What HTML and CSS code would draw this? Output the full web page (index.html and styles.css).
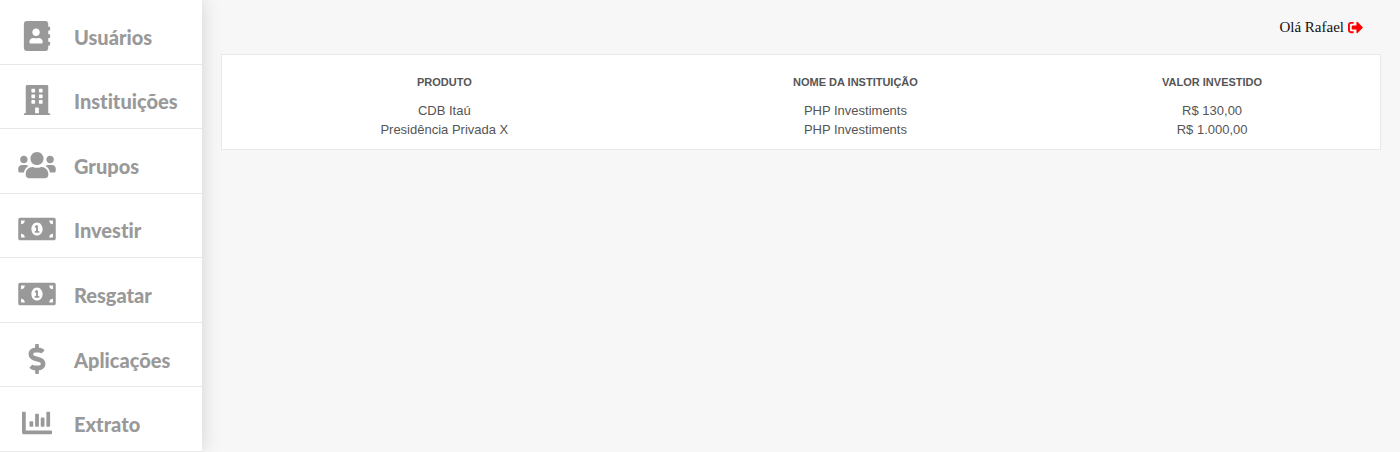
FILE: index.html
```html
<!DOCTYPE html>
<html lang="pt-BR">
<head>
<meta charset="utf-8">
<meta name="viewport" content="width=device-width, initial-scale=1">
<title>Investimentos</title>
<link rel="stylesheet" href="styles.css">
</head>
<body>
<div class="app">
  <nav class="sidebar" aria-label="Menu principal">
    <a class="item" href="#usuarios"><svg class="icon" viewBox="0 0 448 512" aria-hidden="true"><path d="M436 160c6.600 0 12-5.400 12-12v-40c0-6.600-5.400-12-12-12h-20V48c0-26.500-21.500-48-48-48H48C21.500 0 0 21.500 0 48v416c0 26.500 21.500 48 48 48h320c26.500 0 48-21.500 48-48v-48h20c6.600 0 12-5.400 12-12v-40c0-6.600-5.400-12-12-12h-20v-64h20c6.600 0 12-5.400 12-12v-40c0-6.600-5.400-12-12-12h-20v-64h20zm-228-32c35.300 0 64 28.700 64 64s-28.700 64-64 64-64-28.700-64-64 28.700-64 64-64zm112 236.800c0 10.600-10 19.200-22.400 19.200H118.400C106 384 96 375.400 96 364.800v-19.200c0-31.800 30.100-57.600 67.200-57.600h5c12.300 5.100 25.700 8 39.800 8s27.600-2.900 39.800-8h5c37.100 0 67.200 25.800 67.200 57.600v19.200z"/></svg><span class="label">Usuários</span></a>
    <a class="item" href="#instituicoes"><svg class="icon" viewBox="0 0 448 512" aria-hidden="true"><path fill-rule="evenodd" d="M436 480h-20V24c0-13-11-24-24-24H56C43 0 32 11 32 24v456H12c-7 0-12 5-12 12v20h448v-20c0-7-5-12-12-12zM128 76q0-12 12-12h40q12 0 12 12v40q0 12-12 12h-40q-12 0-12-12zM256 76q0-12 12-12h40q12 0 12 12v40q0 12-12 12h-40q-12 0-12-12zM128 172q0-12 12-12h40q12 0 12 12v40q0 12-12 12h-40q-12 0-12-12zM256 172q0-12 12-12h40q12 0 12 12v40q0 12-12 12h-40q-12 0-12-12zM128 268q0-12 12-12h40q12 0 12 12v40q0 12-12 12h-40q-12 0-12-12zM256 268q0-12 12-12h40q12 0 12 12v40q0 12-12 12h-40q-12 0-12-12zM192 396q0-12 12-12h40q12 0 12 12v84h-64z"/></svg><span class="label">Instituições</span></a>
    <a class="item" href="#grupos"><svg class="icon" viewBox="0 0 640 512" aria-hidden="true"><path d="M96 224c35.300 0 64-28.700 64-64s-28.700-64-64-64-64 28.700-64 64 28.700 64 64 64zm448 0c35.300 0 64-28.700 64-64s-28.700-64-64-64-64 28.700-64 64 28.700 64 64 64zm32 32h-64c-17.600 0-33.500 7.100-45.100 18.600 40.300 22.100 68.900 62 75.100 109.400h66c17.700 0 32-14.300 32-32v-32c0-35.300-28.700-64-64-64zm-256 0c61.900 0 112-50.100 112-112S381.900 32 320 32 208 82.100 208 144s50.100 112 112 112zm76.800 32h-8.300c-20.800 10-43.900 16-68.500 16s-47.600-6-68.500-16h-8.300C179.600 288 128 339.600 128 403.200V432c0 26.500 21.500 48 48 48h288c26.500 0 48-21.500 48-48v-28.800c0-63.600-51.600-115.200-115.200-115.200zm-223.700-13.400C161.500 263.100 145.600 256 128 256H64c-35.300 0-64 28.700-64 64v32c0 17.700 14.300 32 32 32h65.900c6.300-47.400 34.900-87.300 75.200-109.400z"/></svg><span class="label">Grupos</span></a>
    <a class="item" href="#investir"><svg class="icon" viewBox="0 0 640 512" aria-hidden="true"><path id="bill" d="M352 288h-16v-88c0-4.420-3.580-8-8-8h-13.580c-4.740 0-9.370 1.400-13.310 4.030l-15.330 10.220a8 8 0 0 0-2.220 11.090l8.880 13.310a8 8 0 0 0 11.090 2.220l.47-.31V288h-16c-4.420 0-8 3.580-8 8v16c0 4.420 3.580 8 8 8h64c4.420 0 8-3.580 8-8v-16c0-4.420-3.580-8-8-8zM608 64H32C14.330 64 0 78.330 0 96v320c0 17.670 14.330 32 32 32h576c17.670 0 32-14.330 32-32V96c0-17.670-14.330-32-32-32zM48 400v-64c35.350 0 64 28.650 64 64H48zm0-224v-64h64c0 35.350-28.650 64-64 64zm272 192c-53.020 0-96-50.150-96-112 0-61.860 42.980-112 96-112s96 50.140 96 112c0 61.870-43 112-96 112zm272 32h-64c0-35.350 28.650-64 64-64v64zm0-224c-35.350 0-64-28.650-64-64h64v64z"/></svg><span class="label">Investir</span></a>
    <a class="item" href="#resgatar"><svg class="icon" viewBox="0 0 640 512" aria-hidden="true"><use href="#bill"/></svg><span class="label">Resgatar</span></a>
    <a class="item" href="#aplicacoes"><svg class="icon" viewBox="0 0 288 512" aria-hidden="true"><path d="M209.200 233.400l-108-31.600C88.700 198.200 80 186.500 80 173.500c0-16.300 13.200-29.500 29.500-29.500h66.300c12.200 0 24.200 3.700 34.200 10.500 6.100 4.100 14.300 3.100 19.500-2l34.800-34c7.100-6.900 6.100-18.400-1.800-24.500C238 74.800 207.400 64.100 176 64V16c0-8.800-7.200-16-16-16h-32c-8.800 0-16 7.200-16 16v48h-2.500C45.800 64-5.400 118.700.5 183.600c4.200 46.100 39.400 83.600 83.800 96.600l102.500 30c12.500 3.700 21.200 15.300 21.200 28.300 0 16.300-13.200 29.500-29.500 29.500h-66.300C100 368 88 364.300 78 357.500c-6.100-4.100-14.300-3.100-19.500 2l-34.800 34c-7.100 6.900-6.100 18.400 1.800 24.500 24.500 19.200 55.100 29.900 86.500 30v48c0 8.800 7.200 16 16 16h32c8.800 0 16-7.200 16-16v-48.200c46.600-.9 90.300-28.600 105.700-72.700 21.500-61.600-14.600-124.800-72.500-141.700z"/></svg><span class="label">Aplicações</span></a>
    <a class="item" href="#extrato"><svg class="icon" viewBox="0 0 512 512" aria-hidden="true"><path d="M332.800 320h38.400c6.400 0 12.800-6.400 12.800-12.800V172.800c0-6.400-6.400-12.800-12.800-12.800h-38.400c-6.400 0-12.800 6.400-12.800 12.800v134.400c0 6.400 6.400 12.800 12.800 12.800zm96 0h38.400c6.400 0 12.800-6.400 12.800-12.800V76.800c0-6.400-6.400-12.800-12.800-12.800h-38.400c-6.400 0-12.800 6.400-12.800 12.800v230.400c0 6.400 6.400 12.800 12.800 12.800zm-288 0h38.400c6.400 0 12.800-6.400 12.800-12.800v-70.400c0-6.400-6.400-12.800-12.800-12.800h-38.400c-6.400 0-12.800 6.400-12.800 12.800v70.400c0 6.400 6.400 12.800 12.800 12.800zm96 0h38.400c6.400 0 12.800-6.400 12.800-12.800V108.800c0-6.400-6.400-12.800-12.800-12.800h-38.400c-6.400 0-12.800 6.400-12.800 12.800v198.400c0 6.400 6.400 12.800 12.800 12.800zM496 384H64V80c0-8.840-7.160-16-16-16H16C7.160 64 0 71.160 0 80v336c0 17.670 14.330 32 32 32h464c8.840 0 16-7.160 16-16v-32c0-8.840-7.160-16-16-16z"/></svg><span class="label">Extrato</span></a>
  </nav>
  <main class="content">
    <header class="topbar">
      <span>Olá Rafael</span>
      <a class="logout" href="#sair" aria-label="Sair"><svg class="logout-icon" viewBox="0 0 512 512" aria-hidden="true"><path d="M497 273L329 441c-15 15-41 4.500-41-17v-96H152c-13.300 0-24-10.700-24-24v-96c0-13.300 10.700-24 24-24h136V88c0-21.400 25.900-32 41-17l168 168c9.300 9.400 9.300 24.600 0 34zM192 436v-40c0-6.600-5.400-12-12-12H96c-17.700 0-32-14.300-32-32V160c0-17.700 14.300-32 32-32h84c6.600 0 12-5.400 12-12V76c0-6.600-5.400-12-12-12H96c-53 0-96 43-96 96v192c0 53 43 96 96 96h84c6.600 0 12-5.400 12-12z"/></svg></a>
    </header>
    <section class="card">
      <table class="table">
        <thead>
          <tr><th class="col-product" scope="col">Produto</th><th scope="col">Nome da Instituição</th><th class="col-value" scope="col">Valor Investido</th></tr>
        </thead>
        <tbody>
          <tr><td>CDB Itaú</td><td>PHP Investiments</td><td>R$ 130,00</td></tr>
          <tr><td>Presidência Privada X</td><td>PHP Investiments</td><td>R$ 1.000,00</td></tr>
        </tbody>
      </table>
    </section>
  </main>
</div>
</body>
</html>
```
FILE: styles.css
```css
* {
  box-sizing: border-box;
}

body {
  margin: 0;
  background: #f7f7f7;
  color: #111;
}

.app {
  display: flex;
  min-height: 100vh;
}

.sidebar {
  display: grid;
  grid-auto-rows: 1fr;
  flex: none;
  width: 202px;
  background: #fff;
  box-shadow: 0 0 18px rgba(0, 0, 0, 0.15);
}

.item {
  display: flex;
  align-items: center;
  gap: 18px;
  padding: 8px 18px 0;
  border-bottom: 1px solid #e8e8e8;
  color: #999;
  font: 900 20px/24px "Fredoka One", Lato, sans-serif;
  font-variant-ligatures: none;
  text-decoration: none;
}

.label {
  padding-top: 2px;
}

.icon {
  flex: none;
  width: 38px;
  height: 30px;
  fill: currentColor;
}

.content {
  flex: 1;
  padding: 18px 19px;
}

.topbar {
  display: flex;
  justify-content: flex-end;
  align-items: center;
  gap: 4px;
  margin-bottom: 18px;
  padding-right: 18px;
  font: 15px/18px "Liberation Serif", serif;
}

.logout {
  display: flex;
  color: #f00;
}

.logout-icon {
  width: 15px;
  height: 15px;
  fill: currentColor;
}

.card {
  padding: 18px 0 10px;
  border: 1px solid #e8e8e8;
  background: #fff;
}

.table {
  width: 100%;
  table-layout: fixed;
  border-collapse: collapse;
  color: #555;
  font: 13px/19px "Liberation Sans", Arial, sans-serif;
  text-align: center;
}

.table th {
  padding: 0 0 9px;
  font-size: 11px;
  text-transform: uppercase;
}

.table td {
  padding: 0;
}

.col-product {
  width: 38.4%;
}

.col-value {
  width: 29%;
}
```
